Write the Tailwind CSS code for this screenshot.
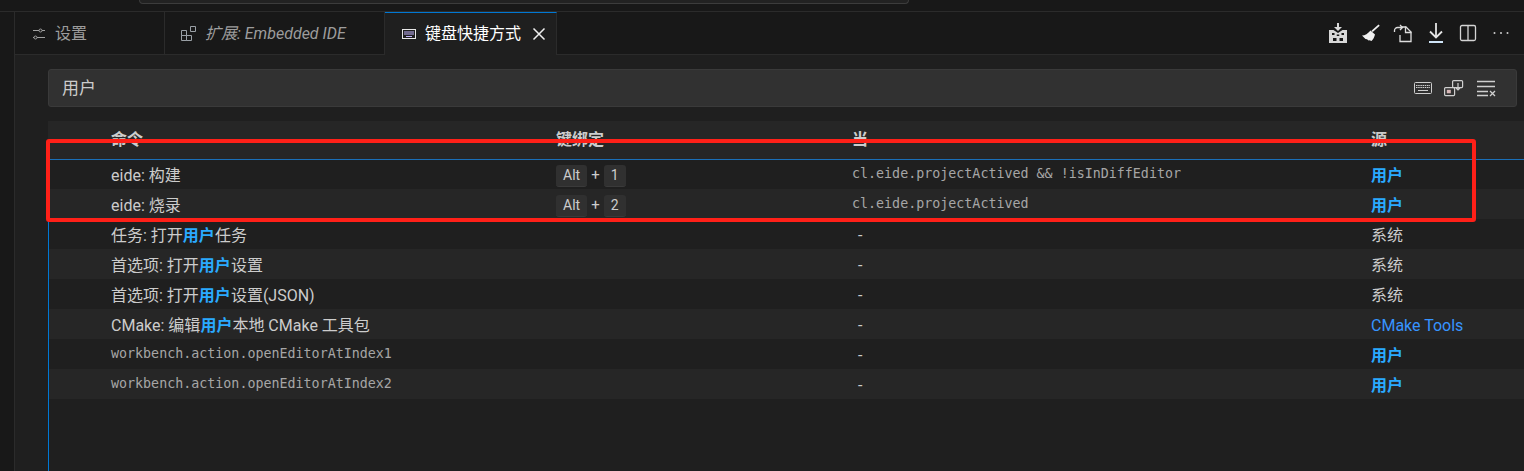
<!DOCTYPE html>
<html lang="en">
<head>
  <meta charset="UTF-8" />
  <title>键盘快捷方式</title>
  <script src="https://cdn.jsdelivr.net/npm/@tailwindcss/browser@4"></script>
</head>
<body class="bg-[#1f1f1f] font-['Roboto','Noto_Sans_CJK_SC',sans-serif] text-[16px] text-[#cccccc]">
<div class="relative h-[471px] w-[1524px] overflow-hidden">

  <!-- title bar strip -->
  <div class="h-[12px] bg-[#181818] border-b border-[#2b2b2b]">
    <div class="ml-[139px] h-[4px] w-[770px] rounded-b-[6px] border border-t-0 border-[#3c3c3c] bg-[#222222]"></div>
  </div>

  <div class="flex h-[459px]">
    <!-- activity bar -->
    <div class="w-[15px] shrink-0 bg-[#181818] border-r border-[#2b2b2b]"></div>

    <div class="flex-1 flex flex-col min-w-0">
      <!-- tabs -->
      <div class="flex h-[43px] shrink-0 bg-[#181818] border-b border-[#2b2b2b]">
        <div class="flex w-[150px] items-center gap-[8px] border-r border-[#2b2b2b] pl-[16px] pt-[1px] text-[#9d9d9d]">
          <svg width="16" height="16" viewBox="0 0 16 16" fill="none" stroke="#a0a0a0" stroke-width="1"><path d="M2 4.500h6M11 4.500h3M2 11.500h1M6 11.500h8"/><circle cx="9.500" cy="4.500" r="1.500"/><circle cx="4.500" cy="11.500" r="1.500"/></svg>
          <span>设置</span>
        </div>
        <div class="flex w-[220px] items-center gap-[7px] border-r border-[#2b2b2b] pl-[14px] pt-[1px] text-[#9d9d9d] italic">
          <svg width="19" height="19" viewBox="0 0 19 19" fill="none" stroke="#9aa0a6" stroke-width="1"><path d="M2.500 6.500h5v5h-5zM7.500 11.500h5v5h-5zM2.500 11.500h5v5h-5z"/><path d="M11.500 2.500h5v5h-5z"/></svg>
          <span class="whitespace-nowrap">扩展: Embedded IDE</span>
        </div>
        <div class="relative -mb-px flex w-[172px] items-center border-t border-r border-t-[#0078d4] border-r-[#2b2b2b] bg-[#1f1f1f] pl-[17px] text-white">
          <svg width="14" height="14" viewBox="0 0 14 14" fill="none" class="mr-[9px]"><rect x="0.500" y="2.500" width="13" height="9" stroke="#e8e8e8"/><path d="M2 5h10M2 7h10M4 9.500h6" stroke="#c4b5fd"/></svg>
          <span class="whitespace-nowrap">键盘快捷方式</span>
          <svg width="16" height="16" viewBox="0 0 16 16" stroke="#f0f0f0" stroke-width="1.500" class="ml-[10px]"><path d="M2.500 2.500l11 11M13.500 2.500l-11 11"/></svg>
        </div>
        <!-- editor actions -->
        <div class="ml-auto flex items-center pr-[13px]">
          <svg width="20" height="22" viewBox="0 0 20 22" fill="#d8d8d8"><path d="M9 1h2v4h3l-4 4-4-4h3z"/><path d="M1 8h4.500l4.500 3 4.500-3H19v13H1zM4 11v2h2.500v-2zM8.750 12.500v1.500h2.500v-1.500zM13.500 11v2H16v-2zM5 16v3h3.500v-3zM11.500 16v3H15v-3z" fill-rule="evenodd"/></svg>
          <svg width="20" height="20" viewBox="0 0 20 20" fill="#f0f0f0" class="ml-[13px]"><path d="M17.500 1.500l1.200 1.200-7 6.300-1.200-1.200z"/><path d="M9.500 7.500l4.500 4c-.5 2.500-2 5-3.500 6.500l-2-.8-1 .3-1.500-1.200-1.500-.2-3.500-3.500c3 0 6-2 8.500-5z"/></svg>
          <svg width="20" height="20" viewBox="0 0 20 20" fill="none" stroke="#dddddd" stroke-width="1.300" class="ml-[12px]"><path d="M8 4h5l5 5v9.500H7V12"/><path d="M12.500 3.500v6h6"/><path d="M1.500 9V7.500a3 3 0 0 1 3-3h4.500M7 2l2.500 2.500L7 7"/></svg>
          <svg width="20" height="22" viewBox="0 0 20 22" fill="none" stroke-width="1.800" class="ml-[13px]"><path d="M10 1v14M4 9.500l6 6 6-6" stroke="#e4e4e4"/><path d="M3 20h14" stroke="#cfe4f7" stroke-width="2"/></svg>
          <svg width="20" height="20" viewBox="0 0 20 20" fill="none" stroke="#d4d4d4" stroke-width="1.300" class="ml-[12px]"><rect x="2.500" y="2.500" width="15" height="15" rx="1.500"/><path d="M10 2.500v15"/></svg>
          <svg width="20" height="20" viewBox="0 0 20 20" fill="#cccccc" class="ml-[13px]"><circle cx="3.500" cy="10" r="1"/><circle cx="10" cy="10" r="1"/><circle cx="16.500" cy="10" r="1"/></svg>
        </div>
      </div>

      <!-- editor body -->
      <div class="pl-[33px] pt-[14px]">
        <!-- search box -->
        <div class="flex h-[38px] w-[1469px] items-center justify-between rounded-[3px] border border-[#3a3a3a] bg-[#313131] pl-[13px] pr-[18px] text-[#cccccc]">
          <span class="mt-[1px] text-[17px]">用户</span>
          <div class="flex items-center">
            <svg width="24" height="24" viewBox="0 0 24 24" fill="none" stroke="#cfcfcf"><rect x="3.500" y="6.500" width="17" height="11" rx="1"/><path d="M5 9.500h14M5 11.500h14" stroke-dasharray="1.500 .7"/><path d="M7 14.500h10"/></svg>
            <svg width="24" height="24" viewBox="0 0 24 24" fill="none" stroke="#cfcfcf" stroke-width="1.200" class="ml-[7px]"><rect x="2.600" y="11.600" width="10" height="8" rx="1"/><rect x="10.600" y="4.600" width="10" height="7" rx="1"/><rect x="4.800" y="13.800" width="4" height="3.500" fill="#d8b8b8" stroke="none"/><path d="M16 7v7m-2-2l2 2 2-2"/></svg>
            <svg width="24" height="24" viewBox="0 0 24 24" fill="none" stroke="#cfcfcf" stroke-width="1.300" class="ml-[8px]"><path d="M3 5.500h18M3 10.500h18M3 15.500h11M3 19.500h11M16 15l5 5M21 15l-5 5"/></svg>
          </div>
        </div>

        <!-- table -->
        <div class="mt-[14px] w-[1476px]">
          <div class="flex h-[38px] items-center bg-[#262626] font-bold text-[#cccccc]">
            <div class="w-[63px]"></div>
            <div class="w-[445px]">命令</div>
            <div class="w-[296px]">键绑定</div>
            <div class="w-[519px]">当</div>
            <div>源</div>
          </div>

          <div class="border-l border-[#0078d4]">
            <div class="flex h-[30px] items-center border-t border-[#1a6fb8] bg-[#1f1f1f] pt-[2px]">
              <div class="w-[62px]"></div>
              <div class="w-[445px]">eide: 构建</div>
              <div class="flex w-[296px] items-center text-[15px]">
                <span class="rounded-[3px] bg-[#303030] border-b border-[#3a3a3a] px-[7px] h-[22px] leading-[21px] text-[14px]">Alt</span><span class="mx-[4px]">+</span><span class="rounded-[3px] bg-[#303030] border-b border-[#3a3a3a] px-[7px] h-[22px] leading-[21px] text-[14px]">1</span>
              </div>
              <div class="w-[519px] font-['DejaVu_Sans_Mono',monospace] text-[13.33px] text-[#a6a6a6] -mt-[4px]">cl.eide.projectActived &amp;&amp; !isInDiffEditor</div>
              <div class="font-bold text-[#2aaaff]">用户</div>
            </div>
            <div class="flex h-[30px] items-center bg-[#262626] pt-[3px]">
              <div class="w-[62px]"></div>
              <div class="w-[445px]">eide: 烧录</div>
              <div class="flex w-[296px] items-center text-[15px]">
                <span class="rounded-[3px] bg-[#303030] border-b border-[#3a3a3a] px-[7px] h-[22px] leading-[21px] text-[14px]">Alt</span><span class="mx-[4px]">+</span><span class="rounded-[3px] bg-[#303030] border-b border-[#3a3a3a] px-[7px] h-[22px] leading-[21px] text-[14px]">2</span>
              </div>
              <div class="w-[519px] font-['DejaVu_Sans_Mono',monospace] text-[13.33px] text-[#a6a6a6] -mt-[4px]">cl.eide.projectActived</div>
              <div class="font-bold text-[#2aaaff]">用户</div>
            </div>
            <div class="flex h-[30px] items-center bg-[#1f1f1f] pt-[3px]">
              <div class="w-[62px]"></div>
              <div class="w-[445px]">任务: 打开<b class="text-[#2aaaff]">用户</b>任务</div>
              <div class="w-[296px]"></div>
              <div class="w-[519px] pl-[6px]">-</div>
              <div>系统</div>
            </div>
            <div class="flex h-[30px] items-center bg-[#262626] pt-[3px]">
              <div class="w-[62px]"></div>
              <div class="w-[445px]">首选项: 打开<b class="text-[#2aaaff]">用户</b>设置</div>
              <div class="w-[296px]"></div>
              <div class="w-[519px] pl-[6px]">-</div>
              <div>系统</div>
            </div>
            <div class="flex h-[30px] items-center bg-[#1f1f1f] pt-[3px]">
              <div class="w-[62px]"></div>
              <div class="w-[445px]">首选项: 打开<b class="text-[#2aaaff]">用户</b>设置(JSON)</div>
              <div class="w-[296px]"></div>
              <div class="w-[519px] pl-[6px]">-</div>
              <div>系统</div>
            </div>
            <div class="flex h-[30px] items-center bg-[#262626] pt-[3px]">
              <div class="w-[62px]"></div>
              <div class="w-[445px]">CMake: 编辑<b class="text-[#2aaaff]">用户</b>本地 CMake 工具包</div>
              <div class="w-[296px]"></div>
              <div class="w-[519px] pl-[6px]">-</div>
              <div class="text-[#3794ff]">CMake Tools</div>
            </div>
            <div class="flex h-[30px] items-center bg-[#1f1f1f] pt-[3px]">
              <div class="w-[62px]"></div>
              <div class="w-[445px] font-['DejaVu_Sans_Mono',monospace] text-[13.33px] text-[#a6a6a6] -mt-[4px]">workbench.action.openEditorAtIndex1</div>
              <div class="w-[296px]"></div>
              <div class="w-[519px] pl-[6px]">-</div>
              <div class="font-bold text-[#2aaaff]">用户</div>
            </div>
            <div class="flex h-[30px] items-center bg-[#262626] pt-[3px]">
              <div class="w-[62px]"></div>
              <div class="w-[445px] font-['DejaVu_Sans_Mono',monospace] text-[13.33px] text-[#a6a6a6] -mt-[4px]">workbench.action.openEditorAtIndex2</div>
              <div class="w-[296px]"></div>
              <div class="w-[519px] pl-[6px]">-</div>
              <div class="font-bold text-[#2aaaff]">用户</div>
            </div>
            <div class="h-[72px]"></div>
          </div>
        </div>
      </div>
    </div>
  </div>

  <!-- red annotation box -->
  <div class="absolute left-[46px] top-[139px] h-[83px] w-[1430px] rounded-[3px] border-[4px] border-[#ff2018]"></div>
</div>
</body>
</html>
